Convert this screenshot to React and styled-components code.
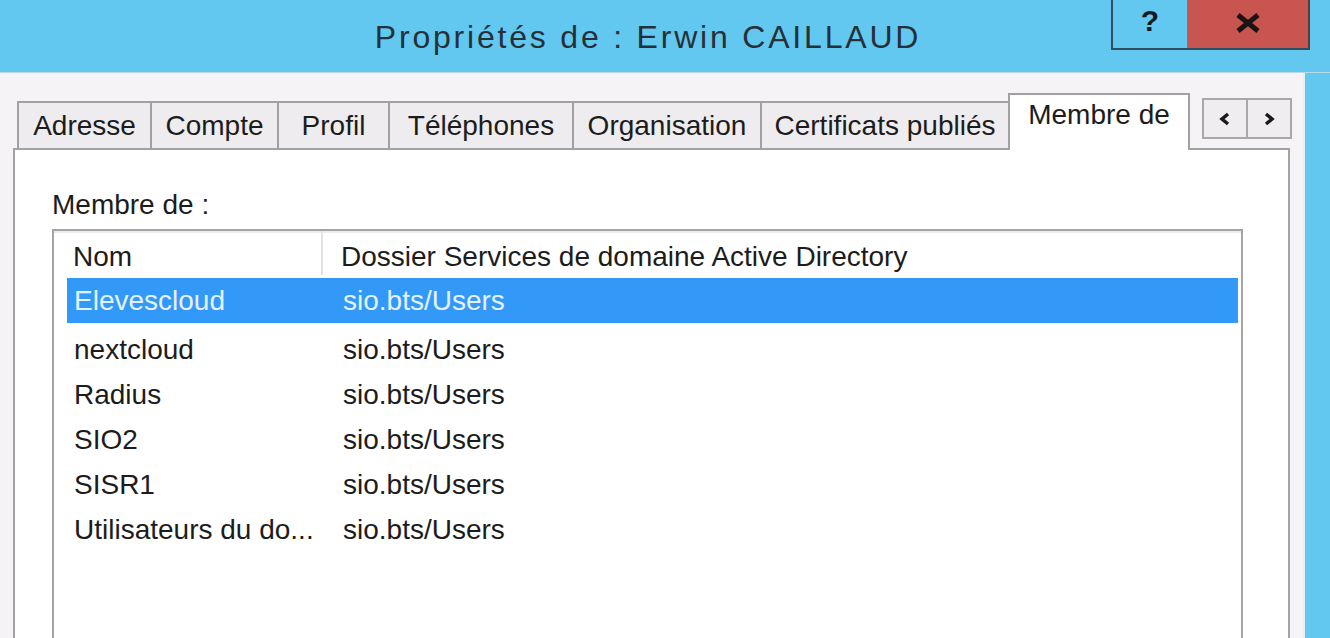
import styled, { createGlobalStyle } from "styled-components";

const GlobalStyle = createGlobalStyle`
  html, body {
    margin: 0;
    padding: 0;
    overflow: hidden;
  }
  body {
    font-family: "Liberation Sans", Arial, sans-serif;
    background: #f6f3f6;
  }
`;

const Window = styled.div`
  width: 1330px;
  height: 638px;
  display: flex;
  flex-direction: column;
  overflow: hidden;
`;

const TitleBar = styled.header`
  height: 73px;
  flex: none;
  display: flex;
  background: #62c8ef;
  border-bottom: 1px solid #b9d9e6;
  box-sizing: border-box;
`;

const Title = styled.h1`
  flex: 1;
  margin: 0;
  padding: 17px 0 0 185px;
  text-align: center;
  font-size: 32px;
  line-height: 40px;
  font-weight: 400;
  letter-spacing: 2.8px;
  color: #263038;
`;

const Controls = styled.div`
  display: flex;
  align-self: flex-start;
  margin-right: 20px;
`;

const CaptionButton = styled.div`
  width: ${(p) => p.w}px;
  height: 50px;
  box-sizing: border-box;
  display: flex;
  align-items: flex-start;
  justify-content: center;
  padding-top: ${(p) => (p.close ? 13 : 4)}px;
  background: ${(p) => (p.close ? "#c85550" : "#62c8ef")};
  border-bottom: 2px solid #2f4f5e;
  border-left: ${(p) => (p.close ? "none" : "2px solid #2f4f5e")};
  border-right: ${(p) => (p.close ? "2px solid #5a3b3a" : "none")};
  color: #141a22;
  font-weight: 700;
  font-size: 30px;
  line-height: 34px;
`;

const Main = styled.div`
  flex: 1;
  display: flex;
  min-height: 0;
`;

const Content = styled.div`
  flex: 1;
  display: flex;
  flex-direction: column;
  padding: 20px 0 0 13px;
`;

const Frame = styled.div`
  width: 25px;
  background: #62c8ef;
  border-left: 2px solid #e4f2f7;
`;

const TabStrip = styled.nav`
  height: 55px;
  flex: none;
  display: flex;
  align-items: flex-end;
  padding-left: 4px;
`;

const Tab = styled.div`
  position: relative;
  width: ${(p) => p.w}px;
  height: ${(p) => (p.active ? 57 : 47)}px;
  margin-right: -2px;
  margin-bottom: ${(p) => (p.active ? -2 : 0)}px;
  z-index: ${(p) => (p.active ? 1 : 0)};
  box-sizing: border-box;
  padding-top: ${(p) => (p.active ? 4 : 7)}px;
  border: 2px solid #a2a0a4;
  border-bottom: none;
  background: ${(p) => (p.active ? "#ffffff" : "#eeecef")};
  text-align: center;
  font-size: 28px;
  line-height: 32px;
  color: #1c1c1c;
  white-space: nowrap;
`;

const Arrows = styled.div`
  align-self: flex-start;
  margin: 5px 0 0 14px;
  display: flex;
`;

const ArrowButton = styled.div`
  width: 46px;
  height: 41px;
  margin-right: -2px;
  box-sizing: border-box;
  border: 2px solid #a9a7ab;
  background: #efedf0;
  display: flex;
  align-items: center;
  justify-content: center;
`;

const Panel = styled.section`
  width: 1277px;
  flex: 1;
  box-sizing: border-box;
  background: #ffffff;
  border: 2px solid #a3a1a5;
  border-bottom: none;
  padding: 39px 0 0 37px;
`;

const Label = styled.div`
  font-size: 28px;
  line-height: 32px;
  color: #1c1c1c;
  margin-bottom: 8px;
`;

const ListBox = styled.div`
  width: 1191px;
  height: 600px;
  box-sizing: border-box;
  border: 2px solid #a5a5a8;
  border-bottom: none;
  box-shadow: inset 0 2px 0 #ececef;
  padding: 0 3px 0 13px;
`;

const HeaderRow = styled.div`
  height: 47px;
  box-sizing: border-box;
  display: grid;
  grid-template-columns: 256px 1fr;
  font-size: 28px;
  line-height: 32px;
  color: #1c1c1c;
`;

const HeaderCell = styled.div`
  padding: 10px 0 0 ${(p) => p.pad}px;
  height: 44px;
  box-sizing: border-box;
  border-right: ${(p) => (p.sep ? "2px solid #e3e3e6" : "none")};
  white-space: nowrap;
`;

const Row = styled.div`
  height: 45px;
  box-sizing: border-box;
  padding: ${(p) => (p.selected ? 1 : 5)}px 0 0 7px;
  display: grid;
  grid-template-columns: 269px 1fr;
  font-size: 28px;
  line-height: 44px;
  background: ${(p) => (p.selected ? "#3399f8" : "transparent")};
  color: ${(p) => (p.selected ? "#e4f1ff" : "#1c1c1c")};
  white-space: nowrap;
`;

const Chevron = ({ dir }) => (
  <svg width="14" height="14" viewBox="0 0 14 14">
    <polyline
      points={dir === "left" ? "10,2 4,7 10,12" : "4,2 10,7 4,12"}
      fill="none"
      stroke="#1a1a1a"
      strokeWidth="3.5"
    />
  </svg>
);

const CloseGlyph = () => (
  <svg width="28" height="20" viewBox="0 0 28 20">
    <path d="M4 2 L24 18 M24 2 L4 18" stroke="#1a1414" strokeWidth="5" />
  </svg>
);

const tabs = [
  { label: "Adresse", w: 135 },
  { label: "Compte", w: 129 },
  { label: "Profil", w: 113 },
  { label: "Téléphones", w: 186 },
  { label: "Organisation", w: 190 },
  { label: "Certificats publiés", w: 250 },
  { label: "Membre de", w: 182, active: true },
];

const groups = [
  "Elevescloud",
  "nextcloud",
  "Radius",
  "SIO2",
  "SISR1",
  "Utilisateurs du do...",
];

const App = () => {
  return (
    <>
      <GlobalStyle />
      <Window>
        <TitleBar>
          <Title>Propriétés de : Erwin CAILLAUD</Title>
          <Controls>
            <CaptionButton w={76}>?</CaptionButton>
            <CaptionButton w={123} close>
              <CloseGlyph />
            </CaptionButton>
          </Controls>
        </TitleBar>
        <Main>
          <Content>
            <TabStrip>
              {tabs.map((t) => (
                <Tab key={t.label} w={t.w} active={t.active}>
                  {t.label}
                </Tab>
              ))}
              <Arrows>
                <ArrowButton>
                  <Chevron dir="left" />
                </ArrowButton>
                <ArrowButton>
                  <Chevron dir="right" />
                </ArrowButton>
              </Arrows>
            </TabStrip>
            <Panel>
              <Label>Membre de :</Label>
              <ListBox>
                <HeaderRow>
                  <HeaderCell pad={6} sep>
                    Nom
                  </HeaderCell>
                  <HeaderCell pad={18}>
                    Dossier Services de domaine Active Directory
                  </HeaderCell>
                </HeaderRow>
                {groups.map((g, i) => (
                  <Row key={g} selected={i === 0}>
                    <span>{g}</span>
                    <span>sio.bts/Users</span>
                  </Row>
                ))}
              </ListBox>
            </Panel>
          </Content>
          <Frame />
        </Main>
      </Window>
    </>
  );
};

export default App;
